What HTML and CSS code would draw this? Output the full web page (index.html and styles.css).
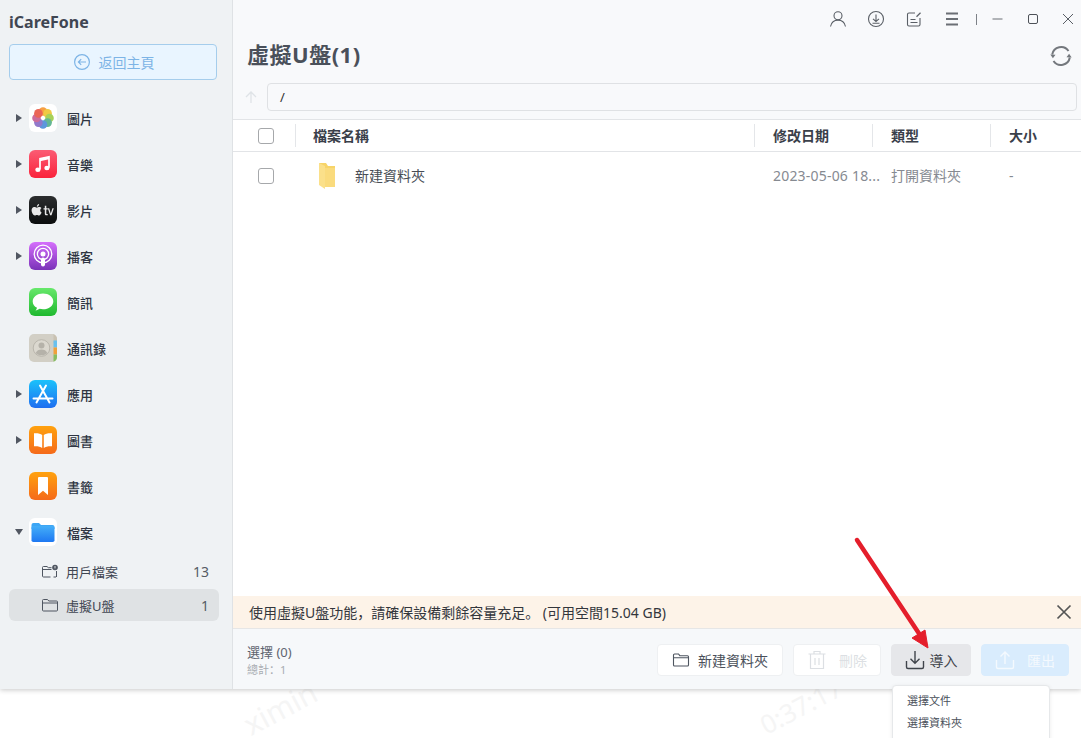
FILE: index.html
```html
<!DOCTYPE html>
<html lang="zh">
<head>
<meta charset="utf-8">
<title>iCareFone</title>
<link rel="stylesheet" href="styles.css">
</head>
<body>
<div class="wm wm-a">ximin&nbsp;&nbsp;&nbsp;1</div>
<div class="wm wm-b">0:37:17</div>
<div class="app">
  <aside class="sidebar">
    <div class="brand">iCareFone</div>
    <button class="home-btn">
      <svg class="i20" viewBox="0 0 20 20" fill="none" stroke="#7db4e6" stroke-width="1.2"><circle cx="10" cy="10" r="7.4"/><path d="M14 10H6.4M9.2 7.2 6.4 10l2.800 2.800"/></svg>
      <span>返回主頁</span>
    </button>
    <nav class="nav">
      <div class="nav-row"><span class="caret"></span><span class="app-icon"><svg viewBox="0 0 28 28"><rect width="28" height="28" rx="6" fill="#fff"/><g opacity=".88"><circle cx="14" cy="7.500" r="4.300" fill="#f7942a"/><circle cx="18.600" cy="9.400" r="4.300" fill="#eec22c"/><circle cx="20.500" cy="14" r="4.300" fill="#9ccb43"/><circle cx="18.600" cy="18.600" r="4.300" fill="#4fae86"/><circle cx="14" cy="20.500" r="4.300" fill="#4689d8"/><circle cx="9.400" cy="18.600" r="4.300" fill="#8267c4"/><circle cx="7.500" cy="14" r="4.300" fill="#c4588f"/><circle cx="9.400" cy="9.400" r="4.300" fill="#e8503f"/></g></svg></span><span class="nav-label">圖片</span></div>
      <div class="nav-row"><span class="caret"></span><span class="app-icon"><svg viewBox="0 0 28 28"><defs><linearGradient id="gm" x1="0" y1="0" x2="0" y2="1"><stop offset="0" stop-color="#fb5c74"/><stop offset="1" stop-color="#fa233b"/></linearGradient></defs><rect width="28" height="28" rx="6" fill="url(#gm)"/><path d="M11 19.500V8.600l9-1.900v11" fill="none" stroke="#fff" stroke-width="1.700"/><path d="M11 8.600l9-1.900v2.600l-9 1.900z" fill="#fff"/><ellipse cx="8.900" cy="19.800" rx="2.600" ry="2.200" fill="#fff"/><ellipse cx="17.900" cy="18" rx="2.600" ry="2.200" fill="#fff"/></svg></span><span class="nav-label">音樂</span></div>
      <div class="nav-row"><span class="caret"></span><span class="app-icon"><svg viewBox="0 0 28 28"><defs><linearGradient id="gt" x1="0" y1="0" x2="0" y2="1"><stop offset="0" stop-color="#2b2d2e"/><stop offset="1" stop-color="#0b0d0d"/></linearGradient></defs><rect width="28" height="28" rx="6" fill="url(#gt)"/><path d="M10.500 11c-1.200 0-1.800.7-2.700.7s-1.600-.7-2.700-.6C3.700 11.200 2.600 12.400 2.600 14.300c0 2.500 1.800 5.200 3.200 5.200.8 0 1.200-.5 2.100-.5s1.300.5 2.100.5c1.100 0 2.100-1.500 2.600-3-1.700-.7-1.900-3.500-.1-4.500-.5-.5-1.300-1-2-1zM7.900 10.700c-.1-1.200.9-2.400 2.200-2.600.1 1.300-.9 2.600-2.200 2.600z" fill="#e8e8e8"/><path d="M15.800 9.800v2.400h-1.300v1.300h1.300v3.900c0 1.400.6 1.900 1.800 1.900h1.100V18h-.7c-.6 0-.7-.2-.7-.8v-3.700h1.400v-1.300h-1.400V9.800zM18.800 12.200l2.300 7h1.400l2.300-7h-1.400l-1.600 5.200-1.600-5.200z" fill="#e8e8e8"/></svg></span><span class="nav-label">影片</span></div>
      <div class="nav-row"><span class="caret"></span><span class="app-icon"><svg viewBox="0 0 28 28"><defs><linearGradient id="gp" x1="0" y1="0" x2="0" y2="1"><stop offset="0" stop-color="#d56efc"/><stop offset="1" stop-color="#7a32b8"/></linearGradient></defs><rect width="28" height="28" rx="6" fill="url(#gp)"/><g fill="none" stroke="#fff" stroke-width="1.300"><circle cx="14" cy="12" r="8.800"/><circle cx="14" cy="12" r="5.600"/></g><circle cx="14" cy="12" r="2.500" fill="#fff"/><rect x="12" y="15.500" width="4" height="9" rx="2" fill="#fff"/></svg></span><span class="nav-label">播客</span></div>
      <div class="nav-row"><span class="caret none"></span><span class="app-icon"><svg viewBox="0 0 28 28"><defs><linearGradient id="gs" x1="0" y1="0" x2="0" y2="1"><stop offset="0" stop-color="#67e86b"/><stop offset="1" stop-color="#1fb92f"/></linearGradient></defs><rect width="28" height="28" rx="6" fill="url(#gs)"/><path d="M14 5.500c-5.800 0-10.300 3.500-10.300 7.900 0 2.700 1.700 5 4.300 6.400-.2 1-.8 1.900-1.500 2.600 1.500-.1 3-.7 4.100-1.600 1.100.3 2.200.5 3.400.5 5.800 0 10.300-3.500 10.300-7.900S19.800 5.500 14 5.500z" fill="#fff"/></svg></span><span class="nav-label">簡訊</span></div>
      <div class="nav-row"><span class="caret none"></span><span class="app-icon"><svg viewBox="0 0 28 28"><rect width="28" height="28" rx="5" fill="#d2cfc5"/><path d="M24.500 0H23a5 5 0 0 1 5 5v4h-3.500z" fill="#c9c2b2"/><rect x="24.500" y="6.500" width="3.500" height="7" fill="#69c0ee"/><rect x="24.500" y="13.500" width="3.500" height="7" fill="#efa03a"/><path d="M24.500 20.500H28V23a5 5 0 0 1-3.500 4.800z" fill="#86bd60"/><circle cx="12.500" cy="14" r="8.300" fill="#dbd8cf" stroke="#b5b2a9" stroke-width=".9"/><circle cx="12.500" cy="11.500" r="3" fill="#b5b2a9"/><path d="M6.700 19c1-2.500 3.200-3.500 5.800-3.500s4.800 1 5.800 3.500c-1.500 1.500-3.600 2.300-5.800 2.300s-4.300-.8-5.800-2.300z" fill="#b5b2a9"/></svg></span><span class="nav-label">通訊錄</span></div>
      <div class="nav-row"><span class="caret"></span><span class="app-icon"><svg viewBox="0 0 28 28"><defs><linearGradient id="ga" x1="0" y1="0" x2="0" y2="1"><stop offset="0" stop-color="#1bc2fb"/><stop offset="1" stop-color="#1e6ef0"/></linearGradient></defs><rect width="28" height="28" rx="6" fill="url(#ga)"/><path d="M11 5.500 20.500 22.500M17 5.500 7.500 22.500M4.500 18.500h19" fill="none" stroke="#fff" stroke-width="2" stroke-linecap="round"/></svg></span><span class="nav-label">應用</span></div>
      <div class="nav-row"><span class="caret"></span><span class="app-icon"><svg viewBox="0 0 28 28"><defs><linearGradient id="gb" x1="0" y1="0" x2="0" y2="1"><stop offset="0" stop-color="#ffa20e"/><stop offset="1" stop-color="#f56a1a"/></linearGradient></defs><rect width="28" height="28" rx="6" fill="url(#gb)"/><path d="M13.200 9c-1.600-1.500-4.500-2-8.200-1.800v13c3.500-.2 6.500.3 8.200 1.800zM14.800 9c1.600-1.500 4.500-2 8.200-1.800v13c-3.500-.2-6.500.3-8.200 1.800z" fill="#fff"/></svg></span><span class="nav-label">圖書</span></div>
      <div class="nav-row"><span class="caret none"></span><span class="app-icon"><svg viewBox="0 0 28 28"><defs><linearGradient id="gk" x1="0" y1="0" x2="0" y2="1"><stop offset="0" stop-color="#ffa20e"/><stop offset="1" stop-color="#f56a1a"/></linearGradient></defs><rect width="28" height="28" rx="6" fill="url(#gk)"/><path d="M10 5h8a1 1 0 0 1 1 1v17l-5-4.200L9 23V6a1 1 0 0 1 1-1z" fill="#fff"/></svg></span><span class="nav-label">書籤</span></div>
      <div class="nav-row"><span class="caret open"></span><span class="app-icon"><svg viewBox="0 0 28 28"><defs><linearGradient id="gf" x1="0" y1="0" x2="0" y2="1"><stop offset="0" stop-color="#44aef8"/><stop offset="1" stop-color="#1e78f2"/></linearGradient></defs><rect width="28" height="28" rx="6" fill="#fff"/><path d="M2.500 7a2 2 0 0 1 2-2h5.500l2 2h11.500a2 2 0 0 1 2 2v2H2.500z" fill="#3da6f5"/><rect x="2.500" y="8" width="23" height="16" rx="1.800" fill="url(#gf)"/></svg></span><span class="nav-label">檔案</span></div>
      <div class="sub-row"><svg class="sub-icon" viewBox="0 0 18 18" fill="none" stroke="#4e5560" stroke-width="1"><path d="M9.500 15H2.500a1 1 0 0 1-1-1V5.500a1 1 0 0 1 1-1H6l1.300 1.200h3.200M1.500 7.500h9M15 15h-2.500"/><path d="M15.500 9v6"/><circle cx="14" cy="5.500" r="2.800" fill="#4e5560" stroke="none"/><path d="M14 4v2M14 6.600v.5" stroke="#fff" stroke-width=".8"/></svg><span class="sub-label">用戶檔案</span><span class="count">13</span></div>
      <div class="sub-row active"><svg class="sub-icon" viewBox="0 0 18 18" fill="none" stroke="#4e5560" stroke-width="1"><path d="M2.500 15a1 1 0 0 1-1-1V4.500a1 1 0 0 1 1-1h4l1.300 1.500h7.700a1 1 0 0 1 1 1V14a1 1 0 0 1-1 1zM1.500 7h15"/></svg><span class="sub-label">虛擬U盤</span><span class="count">1</span></div>
    </nav>
  </aside>
  <main class="main">
    <header class="top">
      <div class="titlebar">
        <svg class="tb-icon" viewBox="0 0 18 18" fill="none" stroke="#5a5f66" stroke-width="1.100"><circle cx="9" cy="5.800" r="4"/><path d="M1.500 16.500c.8-3.700 3.800-6.400 7.500-6.400s6.700 2.700 7.500 6.400"/></svg>
        <svg class="tb-icon" viewBox="0 0 18 18" fill="none" stroke="#5a5f66" stroke-width="1.100"><circle cx="9" cy="9" r="7.500"/><path d="M9 4.500v7M6 8.800 9 11.500l3-2.700M5.500 13.200h7"/></svg>
        <svg class="tb-icon" viewBox="0 0 18 18" fill="none" stroke="#5a5f66" stroke-width="1.100"><path d="M10 3H4a1.500 1.500 0 0 0-1.500 1.500v10A1.500 1.500 0 0 0 4 16h9.500a1.500 1.500 0 0 0 1.500-1.500V8M5.500 9.500h5M5.500 12.500h7"/><path d="M11.500 6.800 15.500 2.800" stroke-width="1.300"/></svg>
        <svg class="tb-icon" viewBox="0 0 18 18" fill="none" stroke="#6b6f75" stroke-width="1.800"><path d="M3 3.500h12M3 9h12M3 14.500h12"/></svg>
        <span class="tb-sep"></span>
        <svg class="tb-win" viewBox="0 0 12 12" fill="none" stroke="#6b6f75" stroke-width="1"><path d="M.5 6h10"/></svg>
        <svg class="tb-win" viewBox="0 0 12 12" fill="none" stroke="#4d5157" stroke-width="1"><rect x="1.500" y="1.500" width="9" height="9" rx="1.500"/></svg>
        <svg class="tb-win" viewBox="0 0 12 12" fill="none" stroke="#5a5f66" stroke-width="1"><path d="M1 1l10 10M11 1 1 11"/></svg>
      </div>
      <div class="title-row">
        <h1 class="title">虛擬U盤(1)</h1>
        <svg class="refresh" viewBox="0 0 24 24" fill="none" stroke="#74787d" stroke-width="2"><path d="M3.200 10.500A9 9 0 0 1 19.500 7"/><path d="M20.800 13.500A9 9 0 0 1 4.500 17"/><path d="M1.300 10.500l2.600 3.800 2.600-3.500zM22.700 13.500l-2.600-3.800-2.600 3.500z" fill="#74787d" stroke="none"/></svg>
      </div>
      <div class="path-row">
        <svg class="up" viewBox="0 0 14 14" fill="none" stroke="#dfe3e7" stroke-width="1.300"><path d="M7 13V2M2 7l5-5 5 5"/></svg>
        <div class="path">/</div>
      </div>
    </header>
    <div class="thead">
      <div class="c-check"><span class="checkbox"></span></div>
      <div class="c-name th">檔案名稱</div>
      <div class="c-date th">修改日期</div>
      <div class="c-type th">類型</div>
      <div class="c-size th">大小</div>
    </div>
    <div class="trow">
      <div class="c-check plain"><span class="checkbox"></span></div>
      <div class="c-name plain name-cell">
        <svg class="folder" viewBox="0 0 20 28"><path d="M2 1h7l2 3h7v21H8z" fill="#f7d469"/><path d="M2 1l6 3v23l-6-4z" fill="#fbe08a"/><path d="M8 6h10v19H8z" fill="#fadb7d"/></svg>
        <span>新建資料夾</span>
      </div>
      <div class="c-date plain muted">2023-05-06 18...</div>
      <div class="c-type plain muted">打開資料夾</div>
      <div class="c-size plain muted">-</div>
    </div>
    <div class="spacer"></div>
    <div class="notice">
      <span>使用虛擬U盤功能，請確保設備剩餘容量充足。 (可用空間15.04 GB)</span>
      <svg class="notice-x" viewBox="0 0 16 16" fill="none" stroke="#555" stroke-width="1.700"><path d="M1.500 1.500l13 13M14.500 1.500l-13 13"/></svg>
    </div>
    <footer class="bottom">
      <div class="sel">
        <div class="sel-main">選擇 (0)</div>
        <div class="sel-sub">總計：1</div>
      </div>
      <div class="actions">
        <button class="btn btn-new"><svg class="b18" viewBox="0 0 18 18" fill="none" stroke="#4e5560" stroke-width="1.100"><path d="M2.500 15a1 1 0 0 1-1-1V4a1 1 0 0 1 1-1h4l1.300 1.700h7.700a1 1 0 0 1 1 1V14a1 1 0 0 1-1 1zM1.500 6.800h15"/></svg><span>新建資料夾</span></button>
        <button class="btn btn-del"><svg class="b20" viewBox="0 0 20 20" fill="none" stroke="#dcdfe3" stroke-width="1.200"><path d="M1.500 4h17M7 4V1.500h6V4M3.500 4v14.500h13V4M8 8v7M12 8v7"/></svg><span>刪除</span></button>
        <button class="btn btn-imp"><svg class="b20" viewBox="0 0 20 20" fill="none" stroke="#3f444b" stroke-width="1.400"><path d="M10 1v12M5.500 8.800 10 13.300l4.500-4.500M1.500 11v6a1.500 1.500 0 0 0 1.500 1.500h14a1.500 1.500 0 0 0 1.500-1.500v-6"/></svg><span>導入</span></button>
        <button class="btn btn-exp"><svg class="b20" viewBox="0 0 20 20" fill="none" stroke="#f4f9fe" stroke-width="1.400"><path d="M10 14V2M5.500 6.500 10 2l4.500 4.500M1.500 10v7a1.500 1.500 0 0 0 1.500 1.500h14a1.500 1.500 0 0 0 1.500-1.500v-7"/></svg><span>匯出</span></button>
      </div>
    </footer>
  </main>
</div>
<div class="menu">
  <div class="menu-item">選擇文件</div>
  <div class="menu-item">選擇資料夾</div>
</div>
<svg class="arrow" viewBox="0 0 85 118" fill="none"><path d="M7 5 70 100" stroke="#e41e2b" stroke-width="4.500" stroke-linecap="round"/><path d="M62 103 78 113 75 95z" fill="#e41e2b" stroke="#e41e2b" stroke-linejoin="round"/></svg>
</body>
</html>
```
FILE: styles.css
```css
* { box-sizing: border-box; }
html, body { margin: 0; height: 100%; background: #fff; overflow: hidden; }
body { position: relative; font-family: "Noto Sans", "Noto Sans CJK SC", sans-serif; color: #2f3540; }

.app { display: flex; height: 689px; box-shadow: 0 1px 5px rgba(0,0,0,.22); position: relative; }

.sidebar { width: 233px; flex: none; background: #eff2f4; border-right: 1px solid #dfe2e5; padding: 0 13px 0 9px; display: flex; flex-direction: column; }
.brand { font-size: 16px; font-weight: 700; color: #3f4652; height: 44px; line-height: 45px; }
.home-btn { height: 36px; width: 208px; border: 1px solid #a5cdec; border-radius: 4px; background: #e9f5ff; color: #7db4e6; font: inherit; font-size: 14px; display: flex; align-items: center; justify-content: center; gap: 7px; padding: 0; }
.i20 { width: 20px; height: 20px; }

.nav { margin-top: 15px; display: flex; flex-direction: column; }
.nav-row { height: 46px; display: flex; align-items: center; }
.caret { width: 20px; flex: none; height: 8px; position: relative; }
.caret::before { content: ""; position: absolute; left: 7px; top: 0; border-left: 6px solid #515761; border-top: 4px solid transparent; border-bottom: 4px solid transparent; }
.caret.open::before { left: 6px; top: 1px; border-top: 6px solid #515761; border-left: 4px solid transparent; border-right: 4px solid transparent; border-bottom: 0; }
.caret.none::before { display: none; }
.app-icon { width: 28px; height: 28px; display: block; flex: none; }
.app-icon svg { width: 28px; height: 28px; display: block; }
.nav-label { margin-left: 10px; font-size: 13px; font-weight: 500; color: #2e3542; }

.sub-row { height: 32px; display: flex; align-items: center; padding: 0 10px 0 32px; border-radius: 6px; font-size: 13px; color: #3f4652; }
.sub-row.active { background: #dfe2e4; margin-top: 2px; }
.sub-icon { width: 18px; height: 18px; flex: none; }
.sub-label { margin-left: 7px; flex: 1; }
.count { font-size: 14px; color: #555b64; }

.main { flex: 1; min-width: 0; display: flex; flex-direction: column; background: #fff; }
.top { background: #f8f9fb; height: 120px; border-bottom: 1px solid #e2e4e7; display: flex; flex-direction: column; }
.titlebar { height: 38px; display: flex; align-items: center; justify-content: flex-end; padding-right: 7px; }
.tb-icon { width: 18px; height: 18px; margin-right: 20px; }
.tb-sep { width: 1px; height: 11px; background: #7d8187; margin: 0 15px 0 -5px; }
.tb-win { width: 12px; height: 12px; margin-right: 23px; }
.tb-win:last-child { margin-right: 0; }
.title-row { height: 36px; display: flex; align-items: center; justify-content: space-between; padding: 0 8px 0 14px; }
.title { margin: 0 0 4px; font-size: 22px; font-weight: 700; color: #4a505a; line-height: 1; letter-spacing: .5px; }
.refresh { width: 24px; height: 24px; margin-bottom: 1px; }
.path-row { display: flex; align-items: center; margin-top: 9px; padding: 0 4px 0 11px; }
.up { width: 14px; height: 14px; flex: none; margin-right: 9px; }
.path { flex: 1; height: 28px; border: 1px solid #dfe1e4; border-radius: 4px; padding-left: 12px; line-height: 26px; font-size: 13px; color: #333; }

.thead, .trow { display: flex; }
.thead { height: 32px; border-bottom: 1px solid #e2e4e7; }
.trow { height: 48px; }
.c-check { width: 62px; display: flex; align-items: center; justify-content: center; padding-left: 4px; }
.c-name { flex: 1; padding-left: 18px; }
.c-date { width: 118px; padding-left: 19px; white-space: nowrap; }
.c-type { width: 118px; padding-left: 19px; }
.c-size { width: 91px; padding-left: 19px; }
.th { font-size: 14px; font-weight: 600; color: #3a404a; line-height: 31px; position: relative; }
.th::before { content: ""; position: absolute; left: 0; top: 4px; bottom: 4px; width: 1px; background: #e4e6e9; }
.plain { font-size: 14px; line-height: 48px; }
.muted { color: #868a91; }
.c-date.muted { letter-spacing: .2px; }
.name-cell { display: flex; align-items: center; gap: 18px; padding-left: 22px; color: #484d55; }
.folder { width: 20px; height: 28px; flex: none; }
.checkbox { width: 16px; height: 16px; border: 1px solid #a6a8ab; border-radius: 3px; background: #fff; display: block; }

.spacer { flex: 1; }
.notice { height: 33px; background: #fdf3e8; border-bottom: 1px solid #e6e6e6; display: flex; align-items: center; justify-content: space-between; padding: 0 9px 0 16px; font-size: 14px; color: #33363c; }
.notice-x { width: 16px; height: 16px; }
.bottom { height: 60px; background: #f6f8fa; display: flex; justify-content: space-between; align-items: center; padding: 2px 12px 0 14px; }
.sel { padding-top: 2px; }
.sel-main { font-size: 13px; color: #5f6570; line-height: 18px; }
.sel-sub { font-size: 11px; color: #a8acb1; line-height: 18px; }
.actions { display: flex; gap: 10px; }
.btn { height: 32px; border: 1px solid #eef0f2; border-radius: 4px; background: #fff; font: inherit; font-size: 14px; display: flex; align-items: center; justify-content: center; gap: 6px; padding: 0; }
.b18 { width: 18px; height: 18px; }
.b20 { width: 20px; height: 20px; }
.btn-new { width: 126px; color: #4a505a; gap: 8px; }
.btn-del { width: 88px; color: #dcdfe3; gap: 12px; }
.btn-imp { width: 80px; background: #e6e7ea; border-color: #e6e7ea; color: #3f444b; gap: 5px; }
.btn-exp { width: 88px; background: #d9ecfd; border-color: #d9ecfd; color: #f4f9fe; gap: 12px; }

.menu { position: absolute; left: 892px; top: 685px; width: 158px; height: 70px; background: #fff; border: 1px solid #e6e8ea; border-radius: 4px; box-shadow: 0 1px 4px rgba(0,0,0,.08); padding: 4px 14px; z-index: 3; }
.menu-item { font-size: 11px; line-height: 22px; color: #4a505a; }
.arrow { position: absolute; left: 850px; top: 535px; width: 85px; height: 118px; z-index: 4; }
.wm { position: absolute; height: 26px; line-height: 26px; font-size: 26px; color: #f5f5f5; transform-origin: 0 100%; transform: rotate(-28deg); white-space: nowrap; }
.wm-a { left: 252px; top: 712px; font-size: 30px; }
.wm-b { left: 768px; top: 712px; }
```
